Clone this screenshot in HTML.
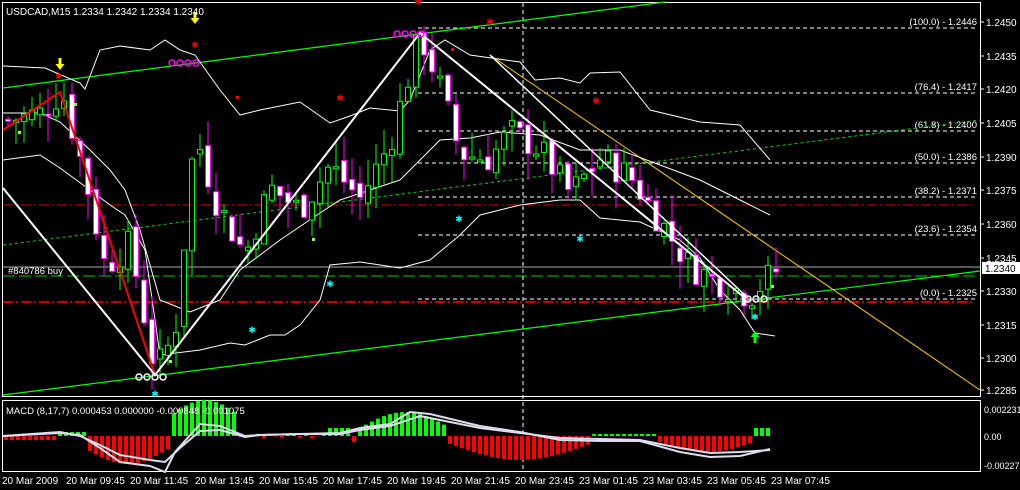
<!DOCTYPE html>
<html><head><meta charset="utf-8"><style>
html,body{margin:0;padding:0;background:#000;width:1020px;height:490px;overflow:hidden}
svg{display:block}
text{font-family:"Liberation Sans",sans-serif;font-size:10px;fill:#fff}
</style></head><body>
<svg id="s" width="1020" height="490" xmlns="http://www.w3.org/2000/svg">
<rect width="1020" height="490" fill="#000"/>
<rect x="2.5" y="2.5" width="978" height="394" fill="none" stroke="#fff"/>
<rect x="2.5" y="400.5" width="978" height="71" fill="none" stroke="#fff"/>
<g id="g"></g>
<g fill="#fff">
<text x="986" y="26">1.2450</text><text x="986" y="60">1.2435</text><text x="986" y="93">1.2420</text>
<text x="986" y="127">1.2405</text><text x="986" y="161">1.2390</text><text x="986" y="194">1.2375</text>
<text x="986" y="228">1.2360</text><text x="986" y="262">1.2345</text><text x="986" y="295">1.2330</text>
<text x="986" y="329">1.2315</text><text x="986" y="362">1.2300</text><text x="986" y="394">1.2285</text>
</g>
<rect x="982" y="262" width="38" height="12" fill="#fff"/>
<text x="985" y="272" style="fill:#000">1.2340</text>
<g stroke="#fff"><line x1="981" y1="22" x2="984" y2="22"/><line x1="981" y1="56" x2="984" y2="56"/><line x1="981" y1="89" x2="984" y2="89"/><line x1="981" y1="123" x2="984" y2="123"/><line x1="981" y1="157" x2="984" y2="157"/><line x1="981" y1="190" x2="984" y2="190"/><line x1="981" y1="224" x2="984" y2="224"/><line x1="981" y1="258" x2="984" y2="258"/><line x1="981" y1="291" x2="984" y2="291"/><line x1="981" y1="325" x2="984" y2="325"/><line x1="981" y1="358" x2="984" y2="358"/><line x1="981" y1="390" x2="984" y2="390"/></g>
<text x="984" y="413" style="font-size:9px">0.002231</text>
<text x="984" y="440" style="font-size:9px">0.00</text>
<text x="984" y="469" style="font-size:9px">-0.002273</text>
<g style="font-size:9.5px">
<text x="2" y="484">20 Mar 2009</text><text x="66" y="484">20 Mar 09:45</text><text x="130" y="484">20 Mar 11:45</text>
<text x="195" y="484">20 Mar 13:45</text><text x="259" y="484">20 Mar 15:45</text><text x="323" y="484">20 Mar 17:45</text>
<text x="387" y="484">20 Mar 19:45</text><text x="451" y="484">20 Mar 21:45</text><text x="515" y="484">20 Mar 23:45</text>
<text x="579" y="484">23 Mar 01:45</text><text x="643" y="484">23 Mar 03:45</text><text x="707" y="484">23 Mar 05:45</text>
<text x="771" y="484">23 Mar 07:45</text>
</g>
<text x="6" y="15">USDCAD,M15  1.2334 1.2342 1.2334 1.2340</text>
<text x="8" y="274" style="font-size:9.5px">#840786 buy</text>
<text x="6" y="414" style="font-size:9.5px">MACD  (8,17,7) 0.000453 0.000000 -0.000848 -0.001075</text>
</svg>
<script>
var g=document.getElementById('g'),NS='http://www.w3.org/2000/svg';
function el(t,a){var e=document.createElementNS(NS,t);for(var k in a)e.setAttribute(k,a[k]);g.appendChild(e);return e}
function Y(p){return 300-(p-1.2325)*22480}
function ln(x1,y1,x2,y2,c,w,d){var a={x1:x1,y1:y1,x2:x2,y2:y2,stroke:c,'stroke-width':w||1};if(d)a['stroke-dasharray']=d;el('line',a)}
function pl(pts,c,w){el('polyline',{points:pts,fill:'none',stroke:c,'stroke-width':w||1})}
ln(3,267,980,267,'#aaa',1);
ln(3,276,975,276,'#0c0',1,'12,4');
ln(3,205,975,205,'#d00',1,'10,3,2,3');
ln(3,302,975,302,'#f00',1.5,'10,3,2,3');
var fib=[[28,'(100.0) - 1.2446'],[93,'(76.4) - 1.2417'],[131,'(61.8) - 1.2400'],[163,'(50.0) - 1.2386'],[197,'(38.2) - 1.2371'],[235,'(23.6) - 1.2354'],[299,'(0.0) - 1.2325']];
fib.forEach(function(f){ln(418,f[0],978,f[0],'#fff',1,'4,3');var t=el('text',{x:977,y:f[0]-3,'text-anchor':'end'});t.textContent=f[1];t.style.fontSize='9.5px'});
ln(523,3,523,471,'#fff',1,'4,3');
ln(3,88,665,2,'#0f0',1.2);ln(3,395,980,271,'#0f0',1.2);
ln(3,245,980,120,'#0d0',1,'3,3');
ln(490,55,980,390,'#fc0',1);
pl('3,66 45,68 80,83 85,89 100,50 120,46 150,50 165,40 180,50 195,55 220,90 240,115 260,110 300,102 330,123 350,116 370,108 400,111 410,100 430,50 445,40 470,55 520,62 535,80 560,78 580,83 590,73 620,72 650,110 700,122 740,125 770,160','#fff',1);
pl('3,113 40,113 60,122 90,150 110,170 125,190 140,230 160,300 190,312 220,300 240,270 280,240 320,213 340,200 370,190 400,180 420,160 440,140 470,138 500,132 540,135 580,150 620,150 660,165 700,180 740,200 770,215','#fff',1);
pl('3,160 40,155 60,168 90,190 110,205 125,215 145,250 160,355 200,350 230,343 245,345 270,335 285,335 300,325 320,300 330,265 360,262 400,268 430,260 460,235 480,215 500,210 520,205 560,200 580,200 600,218 640,222 680,240 700,258 720,290 740,310 755,333 775,336','#fff',1);
var wp=[[8,1.2405],[40,1.2408],[62,1.2418],[85,1.2380],[105,1.2340],[130,1.2350],[155,1.2293],[175,1.2310],[195,1.2400],[215,1.2370],[245,1.2345],[270,1.2375],[300,1.2365],[330,1.2385],[360,1.2370],[390,1.2395],[420,1.2443],[440,1.2420],[460,1.2390],[490,1.2388],[510,1.2400],[540,1.2392],[570,1.2372],[600,1.2388],[630,1.2380],[660,1.2360],[690,1.2340],[720,1.2333],[750,1.2327],[775,1.2338]];
function P(x){for(var i=0;i<wp.length-1;i++){if(x<=wp[i+1][0]){var a=wp[i],b=wp[i+1];return a[1]+(b[1]-a[1])*(x-a[0])/(b[0]-a[0])}}return wp[wp.length-1][1]}
var s=7;function r(){s=(s*9301+49297)%233280;return s/233280}
var prev=P(8);
for(var x=8;x<=776;x+=8){var c=P(x)+(r()-0.5)*0.0014;var o=prev+(r()-0.5)*0.0006;var hi=Math.max(o,c)+r()*0.0012,lo=Math.min(o,c)-r()*0.0012;
var bull=c>=o;var col=bull?'#0f0':'#f0f';
ln(x,Y(hi),x,Y(lo),col,1);
var y1=Y(Math.max(o,c)),y2=Y(Math.min(o,c));if(y2-y1<2)y2=y1+2;
el('rect',{x:x-2.5,y:y1,width:5,height:y2-y1,fill:bull?'#000':'#fff',stroke:col,'stroke-width':1});prev=c;}
pl('3,130 60,92 155,375','#f00',2);
pl('3,188 155,375 420,33 745,298','#fff',2);
pl('490,55 748,298','#fff',1.5);
function circ(x,y,c){el('circle',{cx:x,cy:y,r:3,fill:'none',stroke:c,'stroke-width':1.5})}
[172,180,188,196].forEach(function(x){circ(x,63,'#f0f')});
[397,405,413,421].forEach(function(x){circ(x,34,'#f0f')});
[139,147,155,163].forEach(function(x){circ(x,377,'#fff')});
[748,756,764].forEach(function(x){circ(x,299,'#fff')});
function star(x,y,c){var t=el('text',{x:x,y:y,'text-anchor':'middle'});t.textContent='✱';t.style.fill=c;t.style.fontSize='9px'}
[[59,79],[195,48],[340,101],[490,25],[596,104],[418,5]].forEach(function(p){star(p[0],p[1],'#f00')});
[[459,222],[580,242],[330,287],[252,333],[155,397],[755,320]].forEach(function(p){star(p[0],p[1],'#0ff')});
function arrow(x,y,c,down){var d=down?'M'+(x-1.5)+','+(y-8)+'h3v6h3l-4.5,6l-4.5,-6h3z':'M'+(x-1.5)+','+(y+8)+'h3v-6h3l-4.5,-6l-4.5,6h3z';el('path',{d:d,fill:c})}
arrow(60,66,'#ff0',true);arrow(195,20,'#ff0',true);arrow(755,335,'#0f0',false);
[[74,103],[236,96],[451,48],[18,131],[312,238],[771,285],[169,360]].forEach(function(p){el('rect',{x:p[0],y:p[1],width:3,height:3,fill:p[0]==236||p[0]==451?'#f00':'#9f3'})});
var z=436;
for(var i=0;i<128;i++){var x=6+i*6;if(x>772)break;
var v=0;var t=x;
if(t<60)v=-2;else if(t<85)v=2;else if(t<170)v=-6-8*Math.sin((t-85)/85*Math.PI);else if(t<240)v=10+8*Math.sin((t-170)/70*Math.PI);else if(t<330)v=(r()-0.5)*3;else if(t<350)v=4;else if(t<360)v=-3;else if(t<450)v=4+8*Math.sin((t-360)/90*Math.PI);else if(t<590)v=-4-8*Math.sin((t-450)/140*Math.PI);else if(t<660)v=1;else if(t<755)v=-3-5*Math.sin((t-660)/95*Math.PI);else v=4;
var h=v*2;el('rect',{x:x-2,y:h>0?z-h:z,width:4,height:Math.abs(h),fill:h>0?'#0f0':'#f00'})}
pl('3,436 60,433 80,435 100,448 120,462 150,466 165,472 175,452 200,424 220,426 245,436 260,435 300,434 340,433 360,428 390,424 410,412 430,414 480,426 520,432 560,440 600,441 640,441 680,452 710,457 740,456 770,449','#dde',2);
pl('3,436 60,432 80,436 100,445 120,455 150,460 165,462 180,448 200,431 220,430 245,437 260,435 300,434 340,434 360,430 390,426 420,416 440,420 480,428 520,433 560,438 600,439 640,440 680,448 710,453 740,452 770,450','#dde',2);
</script>
</body></html>
